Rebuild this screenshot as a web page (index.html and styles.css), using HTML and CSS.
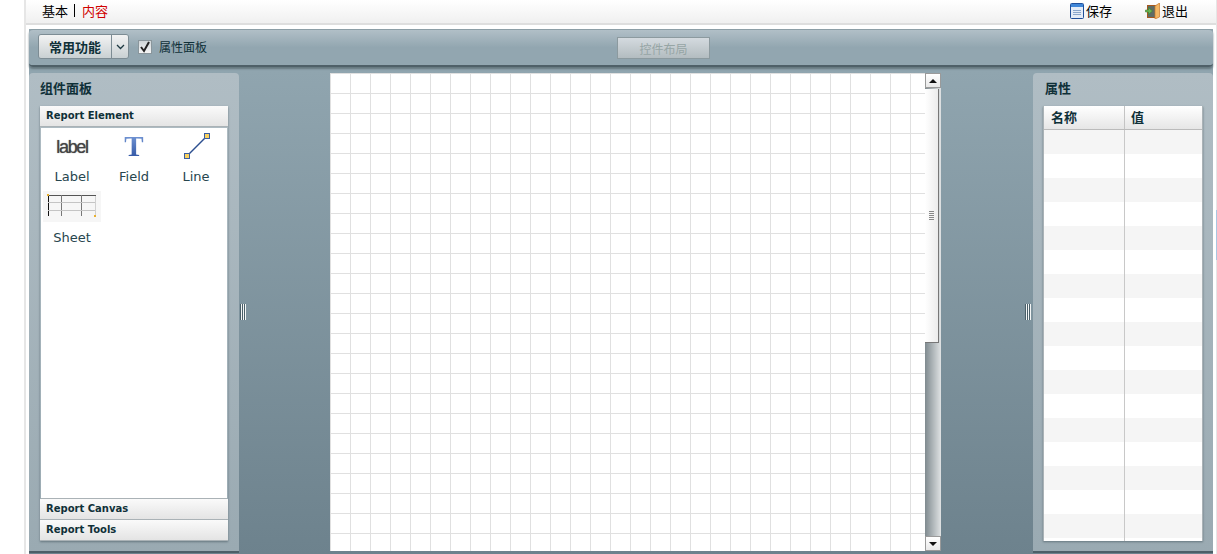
FILE: index.html
```html
<!DOCTYPE html>
<html lang="en">

<head>
    <meta charset="UTF-8">
    <title>Report Designer</title>
    <link rel="stylesheet" href="styles.css">
</head>

<body>
    <div class="page">
        <div class="topbar">
            <div class="tabs">
                <span>基本</span>
                <span class="tab-sep"></span>
                <span class="tab-active">内容</span>
            </div>
            <div class="actions">
                <a class="action">
                    <svg width="14" height="16" viewBox="0 0 14 16">
                        <rect x="0.5" y="0.5" width="13" height="15" rx="1" fill="#e4ecf7" stroke="#1f4f9a" />
                        <rect x="1" y="1" width="12" height="3" fill="#3f86d8" />
                        <path d="M3 7.500h8M3 9.500h8M3 11.500h8" stroke="#8aa6cc" />
                    </svg>
                    保存
                </a>
                <a class="action">
                    <svg width="15" height="16" viewBox="0 0 15 16">
                        <rect x="2.500" y="2.500" width="9" height="12" fill="#5f6b66" stroke="#a5581f" />
                        <path d="M10 3l4.500-3v14l-4.500 2z" fill="#f3b765" stroke="#c9792c" stroke-width="0.7" />
                        <path d="M0.500 7h3V4.500l4 3.500-4 3.500V9h-3z" fill="#6cb552" stroke="#3d7d30" stroke-width="0.6" />
                    </svg>
                    退出
                </a>
            </div>
        </div>

        <div class="workspace">
            <div class="toolbar">
                <div class="split-btn">
                    <button class="split-main">常用功能</button>
                    <button class="split-arrow">
                        <svg width="9" height="6" viewBox="0 0 9 6">
                            <path d="M1 1l3.500 3.500L8 1" fill="none" stroke="#1f3a42" stroke-width="1.300" />
                        </svg>
                    </button>
                </div>
                <label class="check">
                    <span class="check-box">
                        <svg width="12" height="12" viewBox="0 0 12 12">
                            <path d="M2 6l3 4 5-9" fill="none" stroke="#222" stroke-width="2" />
                        </svg>
                    </span>
                    属性面板
                </label>
                <button class="layout-btn" disabled>控件布局</button>
            </div>

            <div class="columns">
                <div class="panel panel-left">
                    <h2 class="panel-title">组件面板</h2>
                    <div class="accordion">
                        <div class="acc-head">Report Element</div>
                        <div class="acc-body">
                            <div class="comp">
                                <div class="comp-icon"><span class="label-icon">label</span></div>
                                <span>Label</span>
                            </div>
                            <div class="comp">
                                <div class="comp-icon"><span class="field-icon">T</span></div>
                                <span>Field</span>
                            </div>
                            <div class="comp">
                                <div class="comp-icon">
                                    <svg class="line-icon" width="28" height="28" viewBox="0 0 28 28">
                                        <path d="M4 24L24 4" stroke="#2c4f8f" stroke-width="1.500" />
                                        <rect x="1.500" y="21.500" width="5" height="5" fill="#fbd35f" stroke="#3c5f9f" />
                                        <rect x="21.500" y="1.500" width="5" height="5" fill="#fbd35f" stroke="#3c5f9f" />
                                    </svg>
                                </div>
                                <span>Line</span>
                            </div>
                            <div class="comp">
                                <div class="comp-icon sheet-wrap">
                                    <svg width="58" height="31" viewBox="0 0 58 31">
                                        <path d="M5.500 4V25" stroke="#111" />
                                        <path d="M5 4.500H53" stroke="#555" />
                                        <path d="M18.500 4V25M38.500 4V25" stroke="#777" />
                                        <path d="M5 11.500H53M5 19.500H53" stroke="#c4c4c4" />
                                        <path d="M52.500 5V25" stroke="#d0d0d0" />
                                        <rect x="4" y="3" width="2" height="2" fill="#e8b030" />
                                        <rect x="51" y="24" width="2" height="2" fill="#e8b030" />
                                    </svg>
                                </div>
                                <span>Sheet</span>
                            </div>
                        </div>
                        <div class="acc-head acc-closed">Report Canvas</div>
                        <div class="acc-head acc-closed">Report Tools</div>
                    </div>
                    <div class="grip"></div>
                </div>

                <div class="canvas-area">
                    <div class="canvas"></div>
                    <div class="scrollbar">
                        <div class="sb-btn"><span class="arrow-up"></span></div>
                        <div class="sb-thumb"><span class="thumb-lines"></span></div>
                        <div class="sb-track"></div>
                        <div class="sb-btn"><span class="arrow-down"></span></div>
                    </div>
                </div>

                <div class="panel panel-right">
                    <h2 class="panel-title">属性</h2>
                    <div class="props">
                        <div class="props-head">
                            <div class="col-name">名称</div>
                            <div class="col-value">值</div>
                        </div>
                        <div class="props-body"></div>
                    </div>
                    <div class="grip"></div>
                </div>
            </div>
        </div>
        <div class="edge-mark"></div>
    </div>
</body>

</html>
```

FILE: styles.css
```css
html,
body {
    margin: 0;
    height: 100%;
    overflow: hidden;
    background-color: #fff;
}

body {
    font-family: "Noto Sans CJK SC", "DejaVu Sans", sans-serif;
    font-size: 12px;
    color: #0f3038;
}

.page {
    position: relative;
    margin-left: 24px;
    width: 1193px;
    height: 554px;
    border-left: 2px solid #e6e6e6;
    border-right: 1px solid #e6e6e6;
    box-sizing: border-box;
    display: flex;
    flex-direction: column;
}

.edge-mark {
    position: absolute;
    right: -1px;
    top: 210px;
    width: 1px;
    height: 50px;
    background-color: #a9c6e0;
}

/* top strip */
.topbar {
    height: 25px;
    flex: none;
    box-sizing: border-box;
    border-bottom: 2px solid #dedede;
    background: linear-gradient(#fff, #f0f0f0);
    display: flex;
    justify-content: space-between;
    align-items: center;
    padding: 0 28px 2px 16px;
    color: #000;
    font-size: 13px;
}

.tabs {
    display: flex;
    align-items: center;
}

.tab-sep {
    width: 1px;
    height: 13px;
    background-color: #000;
    margin: 0 7px 0 6px;
}

.tab-active {
    color: #d00000;
}

.actions {
    display: flex;
    gap: 33px;
}

.action {
    display: flex;
    align-items: center;
    gap: 2px;
}

/* blue area */
.workspace {
    flex: 1;
    margin: 4px 3px 0 3px;
    background: linear-gradient(#93a8b2, #6d828d);
    display: flex;
    flex-direction: column;
    min-height: 0;
}

.toolbar {
    height: 38px;
    flex: none;
    box-sizing: border-box;
    position: relative;
    display: flex;
    align-items: center;
    padding: 0 0 2px 9px;
    border-radius: 4px;
    border-top: 1px solid #8c9ea6;
    background: linear-gradient(#b1bfc7, #92a6b0 50%);
    border-bottom: 2px solid #4f6068;
    box-shadow: 0 2px 2px #66787f;
}

.split-btn {
    display: flex;
    height: 23px;
    border: 1px solid #7d8c94;
    border-radius: 3px;
    overflow: hidden;
}

.split-btn button {
    border: none;
    padding: 0;
    margin: 0;
    background: linear-gradient(#f3f3f3, #c9d0d3);
    font-family: inherit;
    color: #0f3038;
}

.split-main {
    width: 73px;
    font-weight: bold;
    font-size: 13px;
    border-right: 1px solid #7d8c94 !important;
}

.split-arrow {
    width: 16px;
    display: flex;
    align-items: center;
    justify-content: center;
}

.check {
    display: flex;
    align-items: center;
    margin-left: 9px;
    gap: 7px;
}

.check-box {
    width: 12px;
    height: 12px;
    border: 1px solid #8a969c;
    background: linear-gradient(#cfd5d8, #f5f5f5);
    display: flex;
}

.layout-btn {
    position: absolute;
    left: 588px;
    top: 7px;
    width: 93px;
    height: 22px;
    border: 1px solid #8c9a9f;
    background: linear-gradient(#d4dadf, #b3bcc0);
    color: #96a5a5;
    font-family: inherit;
    font-size: 12px;
    padding: 0;
}

.columns {
    flex: 1;
    display: flex;
    margin-top: 6px;
    min-height: 0;
    margin-bottom: 3px;
}

/* side panels */
.panel {
    position: relative;
    box-sizing: border-box;
    border-radius: 4px 4px 0 0;
    background: linear-gradient(#b0bdc4, #9aaab2);
    box-shadow: 0 2px 0 #4c5f68;
    display: flex;
    flex-direction: column;
}

.panel-left {
    width: 210px;
    padding: 0 11px 10px 11px;
}

.panel-right {
    width: 180px;
    padding: 0 10px 10px 10px;
}

.panel-title {
    margin: 0;
    height: 33px;
    line-height: 30px;
    font-size: 13px;
    font-weight: bold;
    color: #0f3038;
}

.panel-right .panel-title {
    padding-left: 2px;
}

.grip {
    position: absolute;
    top: 231px;
    width: 6px;
    height: 16px;
    background: repeating-linear-gradient(90deg, #4a5f68 0, #4a5f68 1px, #f4f6f6 1px, #f4f6f6 2px);
}

.panel-left .grip {
    left: 211px;
}

.panel-right .grip {
    left: -8px;
}

/* component accordion */
.accordion {
    flex: 1;
    display: flex;
    flex-direction: column;
    box-shadow: 0 1px 2px #66777f;
    min-height: 0;
}

.acc-head {
    height: 21px;
    flex: none;
    box-sizing: border-box;
    padding-left: 6px;
    line-height: 19px;
    font-family: "DejaVu Sans", sans-serif;
    font-size: 10px;
    font-weight: bold;
    color: #0f3038;
    background: linear-gradient(#fafafa, #e4e4e4);
    border-bottom: 1px solid #aab2b6;
}

.acc-body {
    flex: 1;
    margin: 1px 1px 0 1px;
    background-color: #fff;
    display: grid;
    grid-template-columns: 62px 62px 62px;
    grid-auto-rows: 61px;
    align-content: start;
    font-family: "DejaVu Sans", sans-serif;
    font-size: 13px;
    color: #27464e;
    border-bottom: 1px solid #aab2b6;
}

.comp {
    display: flex;
    flex-direction: column;
    align-items: center;
    padding-top: 2px;
    gap: 8px;
    box-sizing: border-box;
}

.comp-icon {
    height: 31px;
    display: flex;
    align-items: center;
    justify-content: center;
}

.label-icon {
    padding-top: 3px;
    font-family: "Liberation Sans", sans-serif;
    font-size: 18px;
    letter-spacing: -1.300px;
    color: #444;
    text-shadow: 0 0 1px #666;
}

.field-icon {
    font-family: "Liberation Serif", serif;
    font-size: 29px;
    font-weight: bold;
    line-height: 28px;
    background: linear-gradient(#7c9fdc, #2a4f9f);
    -webkit-background-clip: text;
    background-clip: text;
    color: transparent;
}

.line-icon {
    margin-left: 1px;
}

.sheet-wrap {
    background-color: #f6f6f6;
    width: 58px;
}

/* canvas */
.canvas-area {
    width: 611px;
    margin-left: 91px;
    margin-right: 92px;
    display: flex;
}

.canvas {
    flex: 1;
    background-color: #fff;
    background-image:
        linear-gradient(#e0e0e0 1px, transparent 1px),
        linear-gradient(90deg, #e0e0e0 1px, transparent 1px);
    background-size: 20px 20px;
    background-position: 0 0;
}

.scrollbar {
    width: 16px;
    flex: none;
    display: flex;
    flex-direction: column;
    background: linear-gradient(90deg, #7f8a8f, #dfe2e3);
}

.sb-btn {
    height: 15px;
    flex: none;
    background: linear-gradient(#fff, #e9e9e9);
    border: 1px solid #9a9a9a;
    box-sizing: border-box;
    display: flex;
    align-items: center;
    justify-content: center;
}

.arrow-up {
    border: 4px solid transparent;
    border-top: none;
    border-bottom: 4px solid #111;
}

.arrow-down {
    border: 4px solid transparent;
    border-bottom: none;
    border-top: 4px solid #111;
}

.sb-thumb {
    height: 254px;
    margin-top: 1px;
    width: 14px;
    box-sizing: border-box;
    background: linear-gradient(90deg, #fff, #ececec);
    border-right: 1px solid #777;
    border-bottom: 1px solid #777;
    display: flex;
    align-items: center;
    justify-content: center;
}

.thumb-lines {
    width: 5px;
    height: 9px;
    background: repeating-linear-gradient(#888 0, #888 1px, transparent 1px, transparent 2px);
}

.sb-track {
    flex: 1;
}

/* property grid */
.props {
    flex: 1;
    display: flex;
    flex-direction: column;
    background-color: #fff;
    border-left: 1px solid #aab2b6;
    border-right: 1px solid #aab2b6;
    box-shadow: 0 1px 2px #66777f;
    min-height: 0;
}

.props-head {
    height: 24px;
    flex: none;
    display: flex;
    box-sizing: border-box;
    background: linear-gradient(#fff, #e6e6e6);
    border-bottom: 1px solid #bbb;
    font-weight: bold;
    font-size: 13px;
    line-height: 22px;
    color: #0f3038;
}

.col-name {
    width: 81px;
    box-sizing: border-box;
    padding-left: 7px;
    border-right: 1px solid #c4c4c4;
}

.col-value {
    padding-left: 6px;
}

.props-body {
    flex: 1;
    background:
        linear-gradient(#c8c8c8, #c8c8c8) 80px 0 / 1px 100% no-repeat,
        repeating-linear-gradient(#f5f5f5 0, #f5f5f5 24px, #fff 24px, #fff 48px);
}
```
